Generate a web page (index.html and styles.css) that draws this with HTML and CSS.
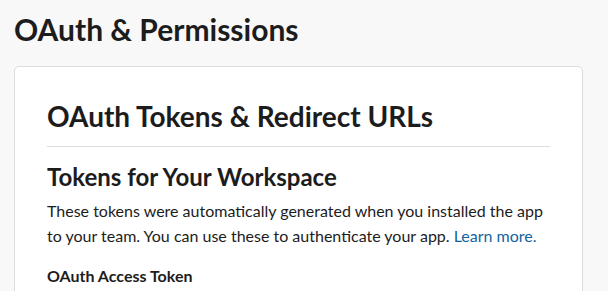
FILE: index.html
```html
<!DOCTYPE html>
<html lang="en">
<head>
  <meta charset="UTF-8" />
  <meta name="viewport" content="width=device-width, initial-scale=1" />
  <title>OAuth &amp; Permissions</title>
  <link rel="stylesheet" href="styles.css">
</head>
<body>

  <div class="page">
    <!-- Page title -->
    <h1 class="page-title">OAuth &amp; Permissions</h1>

    <!-- Tokens card -->
    <section class="card">
      <h2 class="card-title">OAuth Tokens &amp; Redirect URLs</h2>

      <div class="card-body">
        <h3>Tokens for Your Workspace</h3>
        <p>These tokens were automatically generated when you installed the app to your team. You can use these to authenticate your app. <a href="#">Learn more.</a></p>

        <label class="field-label">OAuth Access Token</label>
      </div>
    </section>
  </div>

</body>
</html>
```

FILE: styles.css
```css
/* Basic Reset & Font */
body {
  font-family: 'Lato', 'Noto Sans', sans-serif;
  background-color: #f8f8f8;
  color: #1d1c1d;
  margin: 0;
  padding: 0;
}
/* Page */
.page {
  padding: 11px 25px 0 14px;
}
.page-title {
  margin: 0 0 19px;
  font-size: 30px;
  line-height: 1.2;
  font-weight: 700;
}
/* Card */
.card {
  background: #fff;
  border: 1px solid #dddddd;
  border-radius: 5px;
  padding: 33px 32px 0;
  min-height: 260px;
}
.card-title {
  margin: 0;
  padding-bottom: 12px;
  border-bottom: 1px solid #dddddd;
  font-size: 28px;
  line-height: 1.2;
  font-weight: 700;
}
.card-body h3 {
  margin: 16px 0 8px;
  font-size: 24px;
  line-height: 1.2;
  font-weight: 700;
}
.card-body p {
  margin: 0 0 16px;
  font-size: 16px;
  line-height: 24.5px;
}
.card-body a {
  color: #1264a3;
  text-decoration: none;
}
.field-label {
  display: block;
  font-size: 16px;
  line-height: 24.5px;
  font-weight: 700;
}
```
